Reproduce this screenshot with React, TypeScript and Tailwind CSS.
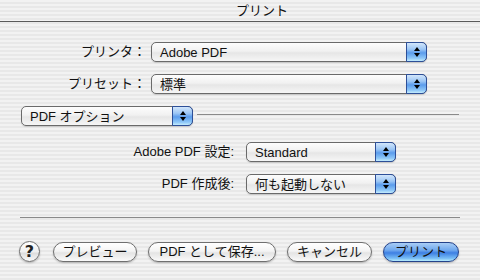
import React from 'react';

const font = "font-['Liberation_Sans','Noto_Sans_CJK_JP',sans-serif]";

function Arrows() {
  return (
    <div className="-my-px -mr-px flex w-[21px] flex-col items-center justify-center gap-[2px] rounded-r-[5px] border border-[#2d4f98] bg-[linear-gradient(to_bottom,#d2e6fb_0%,#9cc6f5_35%,#5b9cec_55%,#8fc8f8_85%,#c4ecfd_100%)]">
      <div className="h-0 w-0 border-x-[3px] border-b-[4px] border-x-transparent border-b-black" />
      <div className="h-0 w-0 border-x-[3px] border-t-[4px] border-x-transparent border-t-black" />
    </div>
  );
}

function Popup({ label, width }: { label: string; width: string }) {
  return (
    <div
      className={`flex h-[20px] items-stretch rounded-[5px] border border-[#6a6a6a] bg-[linear-gradient(to_bottom,#fdfdfd_0%,#f1f1f1_45%,#e6e6e6_55%,#f6f6f6_100%)] shadow-[0_1px_1px_rgba(0,0,0,0.15)] ${width}`}
    >
      <span className="flex flex-1 items-center pl-[8px] text-[13px] leading-none text-[#111]">{label}</span>
      <Arrows />
    </div>
  );
}

function PushButton({ label, width, ml, primary }: { label: string; width: string; ml: string; primary?: boolean }) {
  const look = primary
    ? 'border-[#24428a] bg-[linear-gradient(to_bottom,#a9cdf6_0%,#6fa8ee_40%,#3d7fe3_55%,#78bdf6_85%,#b8ecfd_100%)]'
    : 'border-[#6f6f6f] bg-[linear-gradient(to_bottom,#ffffff_0%,#f4f4f4_45%,#e4e4e4_55%,#fafafa_100%)]';
  return (
    <div
      className={`flex h-[20px] items-center justify-center rounded-full border text-[13px] leading-none text-[#111] shadow-[0_1px_2px_rgba(0,0,0,0.25)] ${look} ${width} ${ml}`}
    >
      {label}
    </div>
  );
}

export default function App() {
  return (
    <div
      className={`flex h-[280px] w-[480px] flex-col overflow-hidden bg-[repeating-linear-gradient(to_bottom,#f2f2f2_0px,#f2f2f2_2px,#e8e8e8_2px,#e8e8e8_4px)] ${font}`}
    >
      {/* title bar */}
      <div className="flex h-[22px] shrink-0 items-center justify-center border-b border-[#5a5a5a] pl-[44px] text-[13px] text-[#111]">
        プリント
      </div>

      <div className="flex flex-col pt-[20px]">
        <div className="flex h-[20px] items-center">
          <span className="w-[146px] text-right text-[13px] text-[#111]">プリンタ：</span>
          <div className="ml-[5px]">
            <Popup label="Adobe PDF" width="w-[276px]" />
          </div>
        </div>

        <div className="mt-[12px] flex h-[20px] items-center">
          <span className="w-[146px] text-right text-[13px] text-[#111]">プリセット：</span>
          <div className="ml-[5px]">
            <Popup label="標準" width="w-[276px]" />
          </div>
        </div>

        <div className="mt-[12px] flex h-[20px] items-start">
          <div className="ml-[21px]">
            <Popup label="PDF オプション" width="w-[172px]" />
          </div>
          <div className="ml-[4px] mr-[21px] mt-[8px] h-px flex-1 bg-[#8a8a8a]" />
        </div>

        <div className="mt-[16px] flex h-[20px] items-center">
          <span className="w-[234px] text-right text-[13px] text-[#111]">Adobe PDF 設定:</span>
          <div className="ml-[12px]">
            <Popup label="Standard" width="w-[150px]" />
          </div>
        </div>

        <div className="mt-[12px] flex h-[20px] items-center">
          <span className="w-[234px] text-right text-[13px] text-[#111]">PDF 作成後:</span>
          <div className="ml-[12px]">
            <Popup label="何も起動しない" width="w-[150px]" />
          </div>
        </div>

        <div className="mx-[20px] mt-[23px] h-px bg-[#8a8a8a]" />

        <div className="mt-[23px] flex items-center pl-[19px]">
          <div className="flex h-[21px] w-[21px] items-center justify-center rounded-full border border-[#6f6f6f] bg-[linear-gradient(to_bottom,#ffffff_0%,#f0f0f0_50%,#dedede_60%,#fafafa_100%)] font-['DejaVu_Sans',sans-serif] text-[16px] font-bold leading-none text-[#222] shadow-[0_1px_2px_rgba(0,0,0,0.25)]">
            ?
          </div>
          <PushButton label="プレビュー" width="w-[84px]" ml="ml-[13px]" />
          <PushButton label="PDF として保存..." width="w-[128px]" ml="ml-[11px]" />
          <PushButton label="キャンセル" width="w-[85px]" ml="ml-[11px]" />
          <PushButton label="プリント" width="w-[76px]" ml="ml-[11px]" primary />
        </div>
      </div>
    </div>
  );
}
